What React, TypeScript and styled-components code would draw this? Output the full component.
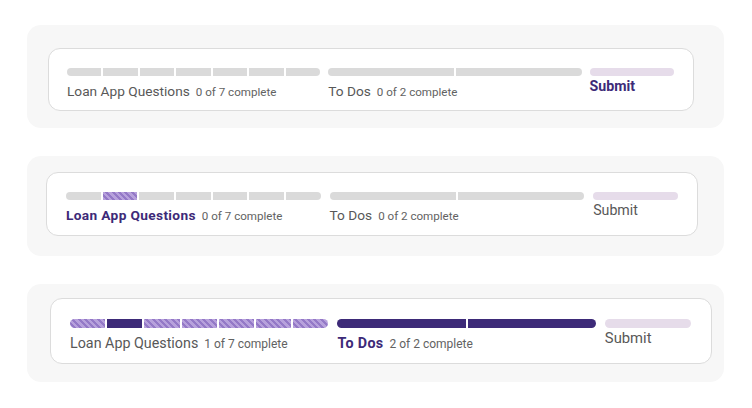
import React from "react";
import styled, { createGlobalStyle, css } from "styled-components";

const Global = createGlobalStyle`
  html, body { margin: 0; padding: 0; background: #ffffff; }
  body { font-family: Roboto, "Liberation Sans", Arial, sans-serif; }
`;

const PURPLE = "#3d2a78";

const Page = styled.div`
  width: 752px;
  height: 408px;
  box-sizing: border-box;
  padding: 25px 28px 0 27px;
  display: flex;
  flex-direction: column;
  gap: 28px;
`;

const Panel = styled.div<{ $pad: string; $h: number }>`
  background: #f7f7f7;
  border-radius: 14px;
  box-sizing: border-box;
  height: ${(p) => p.$h}px;
  padding: ${(p) => p.$pad};
`;

const Card = styled.div<{ $h: number; $pad: string; $gap: number }>`
  background: #ffffff;
  border: 1px solid #dcdcdc;
  border-radius: 12px;
  box-sizing: border-box;
  height: ${(p) => p.$h}px;
  padding: ${(p) => p.$pad};
  display: grid;
  grid-template-columns: 3fr 3fr 1fr;
  column-gap: ${(p) => p.$gap}px;
  align-items: start;
`;

const Step = styled.div<{ $gap: number }>`
  display: flex;
  flex-direction: column;
  gap: ${(p) => p.$gap}px;
  min-width: 0;
`;

const Bar = styled.div<{ $h: number }>`
  display: flex;
  gap: 2px;
  height: ${(p) => p.$h}px;
  border-radius: ${(p) => p.$h / 2}px;
  overflow: hidden;
  background: #ffffff;
`;

type SegKind = "empty" | "striped" | "done" | "submit";

const Segment = styled.div<{ $kind: SegKind }>`
  flex: 1;
  ${(p) =>
    p.$kind === "empty" &&
    css`
      background: #dadada;
    `}
  ${(p) =>
    p.$kind === "done" &&
    css`
      background: ${PURPLE};
    `}
  ${(p) =>
    p.$kind === "submit" &&
    css`
      background: #e6dcea;
    `}
  ${(p) =>
    p.$kind === "striped" &&
    css`
      background: repeating-linear-gradient(
        45deg,
        #b7a1dc 0px,
        #b7a1dc 2.5px,
        #9479c7 2.5px,
        #9479c7 4.5px
      );
    `}
`;

const Label = styled.div<{ $size: number }>`
  display: flex;
  align-items: baseline;
  gap: 6px;
  white-space: nowrap;
  font-size: ${(p) => p.$size}px;
  line-height: 16px;
`;

const Title = styled.span<{ $active: boolean; $spaced: boolean }>`
  color: ${(p) => (p.$active ? PURPLE : "#585858")};
  font-weight: ${(p) => (p.$active ? 700 : 400)};
  letter-spacing: ${(p) => (p.$active && p.$spaced ? "0.35px" : "0")};
`;

const Count = styled.span<{ $size: number }>`
  color: #626262;
  font-size: ${(p) => p.$size}px;
`;

type StepData = {
  title: string;
  count?: string;
  segs: SegKind[];
  active: boolean;
};

type PanelData = {
  panelH: number;
  panelPad: string;
  cardH: number;
  cardPad: string;
  colGap: number;
  barH: number;
  labelGap: number;
  submitGap: number;
  font: number;
  small: number;
  submit: number;
  steps: StepData[];
};

const e = (n: number): SegKind[] => Array.from({ length: n }, () => "empty");

const panels: PanelData[] = [
  {
    panelH: 103,
    panelPad: "23px 30px 17px 21px",
    cardH: 63,
    cardPad: "19px 19px 0 18px",
    colGap: 8,
    barH: 8,
    labelGap: 7,
    submitGap: 2,
    font: 13.7,
    small: 11.6,
    submit: 14.2,
    steps: [
      { title: "Loan App Questions", count: "0 of 7 complete", segs: e(7), active: false },
      { title: "To Dos", count: "0 of 2 complete", segs: e(2), active: false },
      { title: "Submit", segs: ["submit"], active: true },
    ],
  },
  {
    panelH: 100,
    panelPad: "16px 26px 20px 19px",
    cardH: 64,
    cardPad: "19px 19px 0 19px",
    colGap: 9,
    barH: 8,
    labelGap: 7,
    submitGap: 2,
    font: 13.7,
    small: 11.6,
    submit: 14.2,
    steps: [
      {
        title: "Loan App Questions",
        count: "0 of 7 complete",
        segs: ["empty", "striped", "empty", "empty", "empty", "empty", "empty"],
        active: true,
      },
      { title: "To Dos", count: "0 of 2 complete", segs: e(2), active: false },
      { title: "Submit", segs: ["submit"], active: false },
    ],
  },
  {
    panelH: 98,
    panelPad: "14px 12px 18px 23px",
    cardH: 66,
    cardPad: "20px 20px 0 19px",
    colGap: 9,
    barH: 9,
    labelGap: 7,
    submitGap: 2,
    font: 14.3,
    small: 12,
    submit: 14.8,
    steps: [
      {
        title: "Loan App Questions",
        count: "1 of 7 complete",
        segs: ["striped", "done", "striped", "striped", "striped", "striped", "striped"],
        active: false,
      },
      { title: "To Dos", count: "2 of 2 complete", segs: ["done", "done"], active: true },
      { title: "Submit", segs: ["submit"], active: false },
    ],
  },
];

export default function App() {
  return (
    <>
      <Global />
      <Page>
        {panels.map((p, i) => (
          <Panel key={i} $h={p.panelH} $pad={p.panelPad}>
            <Card $h={p.cardH} $pad={p.cardPad} $gap={p.colGap}>
              {p.steps.map((s, j) => (
                <Step key={j} $gap={s.count ? p.labelGap : p.submitGap}>
                  <Bar $h={p.barH}>
                    {s.segs.map((k, m) => (
                      <Segment key={m} $kind={k} />
                    ))}
                  </Bar>
                  <Label $size={s.count ? p.font : p.submit}>
                    <Title $active={s.active} $spaced={!!s.count}>
                      {s.title}
                    </Title>
                    {s.count && <Count $size={p.small}>{s.count}</Count>}
                  </Label>
                </Step>
              ))}
            </Card>
          </Panel>
        ))}
      </Page>
    </>
  );
}
